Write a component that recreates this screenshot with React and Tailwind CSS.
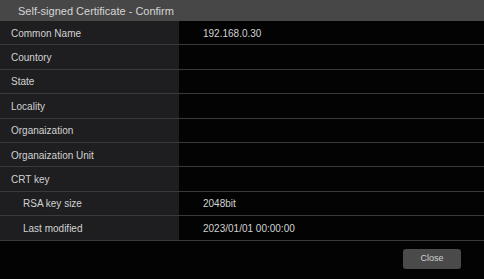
const rows = [
  { label: "Common Name", value: "192.168.0.30" },
  { label: "Countory", value: "" },
  { label: "State", value: "" },
  { label: "Locality", value: "" },
  { label: "Organaization", value: "" },
  { label: "Organaization Unit", value: "" },
  { label: "CRT key", value: "" },
  { label: "RSA key size", value: "2048bit", sub: true },
  { label: "Last modified", value: "2023/01/01 00:00:00", sub: true },
];

export default function App() {
  return (
    <div className="w-[484px] h-[279px] bg-[#030303] flex flex-col font-['Liberation_Sans',Arial,sans-serif] text-[#d2d2d2]">
      <div className="h-[21px] bg-[#474747] flex items-center pl-[18px] pt-[1px] text-[11px] text-[#d6d6d6]">
        Self-signed Certificate - Confirm
      </div>
      <div className="flex flex-col">
        {rows.map((r, i) => (
          <div key={i} className="h-[24.4px] flex border-b border-[#3a3a3a] text-[10px]">
            <div className={`w-[179px] bg-[#1e1e20] flex items-center pt-[1px] ${r.sub ? "pl-[23px]" : "pl-[11px]"}`}>
              {r.label}
            </div>
            <div className="flex-1 flex items-center pt-[1px] pl-[24px]">{r.value}</div>
          </div>
        ))}
      </div>
      <div className="flex justify-end pr-[23px] pt-[8px]">
        <button className="w-[58px] h-[20px] bg-[#4a4a4a] rounded-[3px] pt-[1px] text-[9px] text-[#d0d0d0]">
          Close
        </button>
      </div>
    </div>
  );
}
